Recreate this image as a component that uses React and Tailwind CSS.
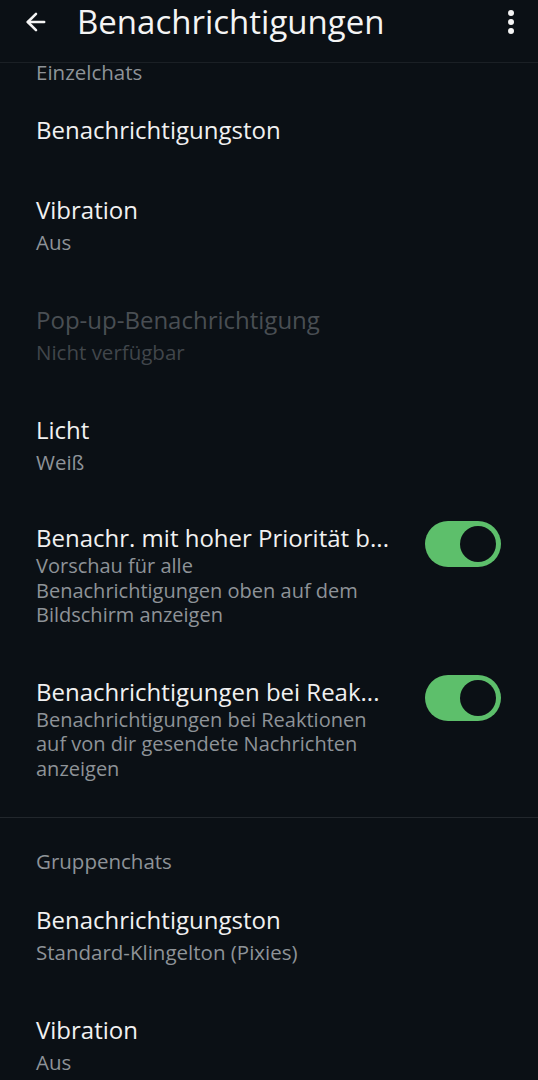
import { ArrowLeft } from 'lucide-react';

const font = { fontFamily: '"Open Sans", "Noto Sans", sans-serif' };

function SectionLabel({ children, className }) {
  return (
    <div className={`px-[36px] text-[20.5px] leading-[18px] text-[#8e9398] ${className}`}>{children}</div>
  );
}

function Item({ title, summary, disabled }) {
  return (
    <div className="px-[36px] py-[25px]">
      <div className={`text-[24px] leading-[30px] ${disabled ? 'text-[#494e53]' : 'text-[#f1f1f1]'}`}>{title}</div>
      {summary && (
        <div className={`mt-[4px] text-[20.5px] leading-[26px] ${disabled ? 'text-[#41464b]' : 'text-[#8e9398]'}`}>
          {summary}
        </div>
      )}
    </div>
  );
}

function Toggle() {
  return (
    <div className="flex h-[46px] w-[76px] shrink-0 items-center justify-end rounded-full bg-[#5dbf6b] pr-[5px]">
      <div className="h-[36px] w-[36px] rounded-full bg-[#0b1015]" />
    </div>
  );
}

function SwitchItem({ title, lines, className }) {
  return (
    <div className={`flex items-start gap-[20px] pl-[36px] pr-[37px] ${className}`}>
      <div className="min-w-0 flex-1">
        <div className="whitespace-nowrap text-[24px] leading-[33px] text-[#f1f1f1]">{title}</div>
        <div className="text-[20px] leading-[24.5px] text-[#8e9398]">
          {lines.map((l) => (
            <div key={l} className="whitespace-nowrap">{l}</div>
          ))}
        </div>
      </div>
      <Toggle />
    </div>
  );
}

export default function App() {
  return (
    <div className="h-[1080px] w-[538px] overflow-hidden bg-[#0b1015]" style={font}>
      <div className="flex h-[63px] items-start border-b border-[#1b2025] pl-[22px] pr-[24px] pt-[2px]">
        <div className="flex h-[40px] flex-1 items-center">
          <ArrowLeft className="h-[28px] w-[28px] text-[#f4f4f4]" strokeWidth={2.2} />
          <div className="ml-[27px] flex-1 text-[33px] leading-[40px] text-[#f4f4f4]">Benachrichtigungen</div>
          <div className="flex flex-col items-center gap-[3px]">
            <div className="h-[6px] w-[6px] rounded-full bg-[#f4f4f4]" />
            <div className="h-[6px] w-[6px] rounded-full bg-[#f4f4f4]" />
            <div className="h-[6px] w-[6px] rounded-full bg-[#f4f4f4]" />
          </div>
        </div>
      </div>

      <SectionLabel className="pb-[9px]">Einzelchats</SectionLabel>
      <Item title="Benachrichtigungston" />
      <Item title="Vibration" summary="Aus" />
      <Item title="Pop-up-Benachrichtigung" summary="Nicht verfügbar" disabled />
      <Item title="Licht" summary="Weiß" />
      <SwitchItem
        className="pt-[21px] pb-[24px]"
        title="Benachr. mit hoher Priorität b..."
        lines={['Vorschau für alle', 'Benachrichtigungen oben auf dem', 'Bildschirm anzeigen']}
      />
      <SwitchItem
        className="pt-[23px] pb-[36px]"
        title="Benachrichtigungen bei Reak..."
        lines={['Benachrichtigungen bei Reaktionen', 'auf von dir gesendete Nachrichten', 'anzeigen']}
      />
      <div className="h-px bg-[#22272c]" />

      <SectionLabel className="pt-[34px] pb-[10px]">Gruppenchats</SectionLabel>
      <Item title="Benachrichtigungston" summary="Standard-Klingelton (Pixies)" />
      <Item title="Vibration" summary="Aus" />
    </div>
  );
}
